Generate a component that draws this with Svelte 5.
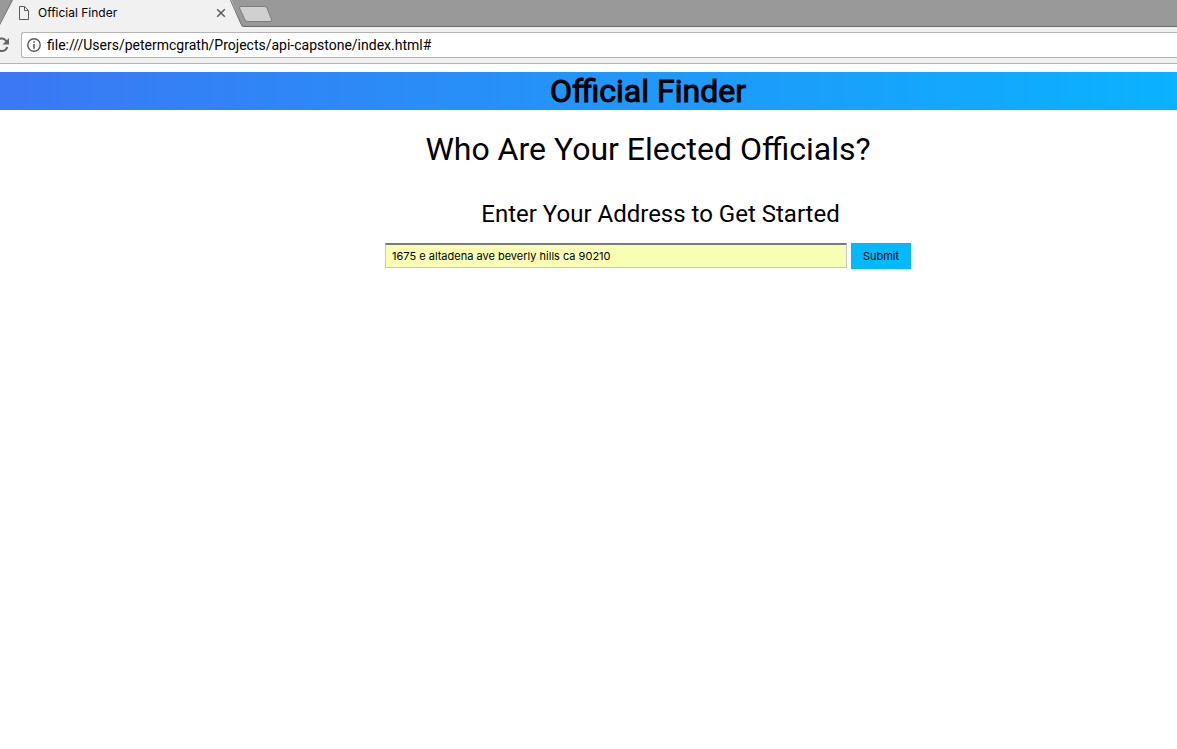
<script>
  let address = $state('1675 e altadena ave beverly hills ca 90210');
  let url = $state('file:///Users/petermcgrath/Projects/api-capstone/index.html#');
</script>

<div class="browser">
  <div class="tabs">
    <svg class="tab-shape" width="280" height="27" viewBox="0 0 280 27" aria-hidden="true">
      <path d="M0 26V23L13-1H231L242 26.500H280V27H0Z" fill="#f1f1f1" />
      <path d="M-1 26L13-1M230-1L241 24Q242 26.500 244 26.500H280" fill="none" stroke="#6b6b6b" />
      <path d="M241 6.500H264Q266 6.500 267 8L271.500 19.500Q272 21.500 270 21.500H248Q246 21.500 245 20L239.500 8Q239 6.500 241 6.500Z" fill="#d0d0d0" stroke="#7d7d7d" />
    </svg>
    <div class="tab">
      <svg width="12" height="14" viewBox="0 0 12 14" fill="none" stroke="#5a5a5a" aria-hidden="true">
        <path d="M1.500 .5H6.500L10.500 4.500V13.500H1.500Z M6.500 .5V4.500H10.500" />
      </svg>
      <span class="tab-name">Official Finder</span>
      <button class="close" aria-label="Close tab">
        <svg width="10" height="10" viewBox="0 0 10 10" fill="none" stroke="#5a5a5a" stroke-width="1.500">
          <path d="M1.200 1.200L8.800 8.800M8.800 1.200L1.200 8.800" />
        </svg>
      </button>
    </div>
  </div>
  <div class="toolbar">
    <button class="reload" aria-label="Reload">
      <svg width="10" height="16" viewBox="0 0 10 16">
        <path d="M-2 2.900A5.300 5.300 0 0 1 6.300 4.200M7.200 10A5.300 5.300 0 0 1-2 12.100" fill="none" stroke="#646464" stroke-width="2" />
        <path d="M9 1V7.500H2.500Z" fill="#646464" />
      </svg>
    </button>
    <div class="location">
      <svg width="14" height="14" viewBox="0 0 14 14" aria-hidden="true">
        <circle cx="7" cy="7" r="6.200" fill="none" stroke="#5a5a5a" stroke-width="1.400" />
        <path d="M6.200 3.200H7.800V4.800H6.200ZM6.200 6H7.800V10.800H6.200Z" fill="#5a5a5a" />
      </svg>
      <input aria-label="Page address" bind:value={url} />
    </div>
  </div>
</div>

<main>
  <header><h1>Official Finder</h1></header>
  <section>
    <h2>Who Are Your Elected Officials?</h2>
    <form onsubmit={(event) => event.preventDefault()}>
      <label for="address">Enter Your Address to Get Started</label>
      <div class="fields">
        <input id="address" bind:value={address} />
        <button type="submit">Submit</button>
      </div>
    </form>
  </section>
</main>

<style>
  :global(body) {
    background: #fff;
    overflow-x: hidden;
  }
  input,
  button {
    box-sizing: border-box;
    font-family: Inter, sans-serif;
    color: #000;
    outline: none;
  }
  .browser {
    font-family: Inter, sans-serif;
  }
  .tabs {
    height: 27px;
    box-sizing: border-box;
    background: #999;
    border-bottom: 1px solid #6b6b6b;
    display: grid;
  }
  .tab-shape,
  .tab {
    grid-area: 1 / 1;
  }
  .tab {
    display: flex;
    align-items: center;
    width: 208px;
    height: 26px;
    padding-left: 18px;
    gap: 8px;
  }
  .tab-name {
    flex: 1;
    font-size: 12px;
    line-height: 14px;
  }
  .close,
  .reload {
    display: flex;
    padding: 0;
    border: 0;
    background: none;
  }
  .toolbar {
    display: flex;
    align-items: center;
    gap: 11px;
    height: 37px;
    box-sizing: border-box;
    padding-bottom: 1px;
    background: #f1f1f1;
    border-bottom: 1px solid #b3b3b3;
  }
  .location {
    flex: 1;
    display: flex;
    align-items: center;
    gap: 6px;
    height: 26px;
    box-sizing: border-box;
    padding-left: 5px;
    background: #fff;
    border: 1px solid #b3b3b3;
    border-right: 0;
    border-radius: 3px 0 0 3px;
  }
  .location input {
    flex: 1;
    padding: 0;
    border: 0;
    font-family: Roboto, sans-serif;
    font-size: 14px;
  }
  main {
    padding-top: 8px;
    font-family: Roboto, sans-serif;
    text-align: center;
    color: #000;
  }
  header,
  section {
    padding-left: 119px;
  }
  header {
    background: linear-gradient(to right, #3b78f3, #0ab2ff);
  }
  h1,
  h2 {
    margin: 0;
    font-size: 32px;
    line-height: 38px;
    font-weight: 400;
  }
  h1 {
    -webkit-text-stroke: 1px #000;
  }
  h2 {
    padding-top: 20px;
  }
  label {
    display: block;
    padding: 31px 0 14px 25px;
    font-size: 24px;
    line-height: 30px;
  }
  .fields {
    display: flex;
    justify-content: center;
    align-items: flex-start;
    gap: 4px;
  }
  #address {
    width: 462px;
    height: 25px;
    padding: 0 6px;
    background: #f8ffb5;
    border: 1px solid #c5c5ca;
    border-top: 2px solid #7b7b7b;
    font-size: 11px;
  }
  .fields button {
    width: 60px;
    height: 26px;
    padding: 0;
    background: #00b9ff;
    border: 0;
    font-size: 11px;
  }
</style>
